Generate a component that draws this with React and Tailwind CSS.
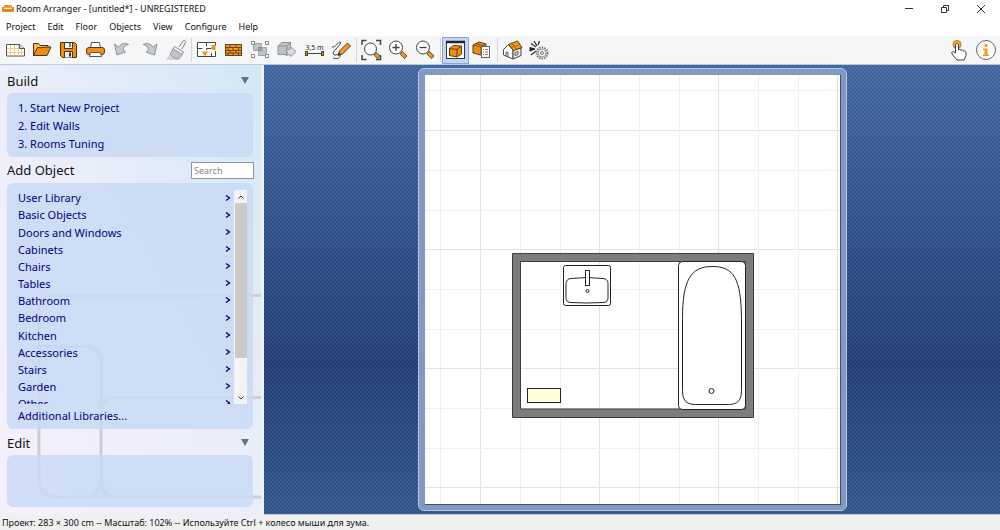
import React, { useState } from 'react';

const BUILD_STEPS = ['1. Start New Project', '2. Edit Walls', '3. Rooms Tuning'];

const CATEGORIES = [
  'User Library',
  'Basic Objects',
  'Doors and Windows',
  'Cabinets',
  'Chairs',
  'Tables',
  'Bathroom',
  'Bedroom',
  'Kitchen',
  'Accessories',
  'Stairs',
  'Garden',
  'Other',
];

const MENUS = ['Project', 'Edit', 'Floor', 'Objects', 'View', 'Configure', 'Help'];

// Toolbar drawings, all on a 24x24 grid
const ICONS = {
  new: (
    <>
      <path d="M3.500 6.500h13l5 4v7.500h-18z" fill="#fffdf5" stroke="#555" />
      <path d="M7.500 7v10.500M11.500 7v10.500M15.500 7v10.500M18.500 11v6.500M4 10.500h12M4 14.500h17" stroke="#f3c98d" />
      <path d="M16.500 6.500v4h5" fill="#ddd" stroke="#555" />
    </>
  ),
  open: (
    <>
      <path d="M3.500 17.500v-12h5l1.500 2h8v3" fill="#ffb74a" stroke="#4a3214" />
      <path d="M3.500 17.500l4-8c4 1 8-1 13.500-.500l-4 8.500z" fill="#f08c14" stroke="#4a3214" />
    </>
  ),
  save: (
    <>
      <path d="M3.500 4.500h14l2 2v13h-14l-2-2z" fill="#f28c13" stroke="#4a3214" />
      <rect x="7.500" y="4.500" width="8" height="6" fill="#fff" stroke="#4a3214" />
      <path d="M7.500 19.500v-6h8v6" fill="#eee" stroke="#4a3214" />
      <path d="M12 14.500h2v4h-2z" fill="#333" />
      <path d="M12 5h2v4h-2z" fill="#777" />
    </>
  ),
  print: (
    <>
      <path d="M6.500 10l1-5.500h8l1 5.500" fill="#fff" stroke="#555" />
      <rect x="2.500" y="9.500" width="18" height="7" rx="2.500" fill="#f28c13" stroke="#5b3a10" />
      <path d="M6.500 14.500h10l1 4h-12z" fill="#fff" stroke="#555" />
    </>
  ),
  undo: <path d="M3.500 6L6 17l8.500-3-2.500-2c.500-3 2.500-5 5.500-5.500C13.500 4.500 9.500 6 7.500 9z" fill="#c6c9cc" stroke="#8f9398" />,
  redo: <path d="M19 6l-2.500 11L8 14l2.500-2C10 9 8 7 5 6.500 9 4.500 13 6 15 9z" fill="#c6c9cc" stroke="#8f9398" />,
  brush: (
    <>
      <path d="M0 22h14l4-4-9-6z" fill="#d4d6d9" />
      <path d="M14 9l4-6c1-1.500 3.500 0 2.500 1.500L17 11" fill="#eee" stroke="#888" />
      <path d="M9.500 8.500l9 5.500-1.500 2.500-9-5.500z" fill="#f4f4f4" stroke="#888" />
      <path d="M8 11l9 5.500-4 4.500c-3-.500-6-2-8-4.500z" fill="#c0c3c7" stroke="#999" />
    </>
  ),
  plan: (
    <>
      <path d="M2.500 4.500h18v14h-18z" fill="#fff" />
      <path d="M2.500 4.500h18v3M20.500 13v5.500h-18v-14M2.500 10.500h5M11.500 4.500v4M11.500 12v-1.500h5M16.500 18v-3" stroke="#444" />
      <rect x="16.500" y="7" width="4" height="5" fill="#f0941f" />
      <path d="M7 13.500h6l-2 4H9z" fill="#f0941f" />
    </>
  ),
  wall: (
    <>
      <rect x="3.500" y="6.500" width="16" height="11" fill="#f29a24" stroke="#6b4510" />
      <path d="M3.500 9.500h16M3.500 12.500h16M3.500 15h16M8 6.500v3M14 6.500v3M6 9.500v3M11 9.500v3M16.500 9.500v3M8 12.500V15M14 12.500V15M6 15v2.500M11 15v2.500M16.500 15v2.500" stroke="#6b4510" />
    </>
  ),
  group: (
    <>
      <path d="M4.500 5.500h8v4h5v8h-8v-5h-5z" fill="#bfc2c5" stroke="#a2a5a8" />
      <path d="M9.500 12.500v-3h3v3z" fill="#a9acaf" stroke="#8b8e91" />
      <g fill="#fff" stroke="#8b8e91">
        <rect x="2.500" y="3.500" width="3" height="3" />
        <rect x="16.500" y="3.500" width="3" height="3" />
        <rect x="2.500" y="16.500" width="3" height="3" />
        <rect x="16.500" y="16.500" width="3" height="3" />
      </g>
    </>
  ),
  move: (
    <>
      <path d="M2 8l4-3.500h8.500v8L11 16.500H2z" fill="#bfc2c5" stroke="#8e9195" />
      <path d="M2 8h9v8.500M11 8l3.500-3.500" stroke="#8e9195" />
      <path d="M10 12l4-1 1-2 5 4.500-5 5-1-2-4 1 1.500-2.500z" fill="#d8dadc" stroke="#8e9195" />
    </>
  ),
  measure: (
    <>
      <path d="M4 15.500h16" stroke="#444" />
      <rect x="2.500" y="13.500" width="2" height="4" fill="#c98a28" stroke="#5b4418" />
      <rect x="18.500" y="13.500" width="2" height="4" fill="#c98a28" stroke="#5b4418" />
      <text x="11.500" y="11.500" textAnchor="middle" fontSize="7" fill="#222">3,5 m</text>
    </>
  ),
  draw: (
    <>
      <path d="M2 9c3 1 6-5 8-5s-1 4-4 7-4 6-1 6 4-2 5 0-2 5-7 3" stroke="#444" />
      <path d="M8 17.500l1.500-4.500L17.500 5l3 3-8 8z" fill="#f2962a" stroke="#5b3a10" />
      <path d="M8 17.500l1-3 2 2z" fill="#333" />
    </>
  ),
  zoomFit: (
    <>
      <path d="M2 7V2.500h4.500M16 2.500h4.500V7M2 17v4.500h4.500M16 21.500h4.500V17" stroke="#444" strokeWidth="1.500" />
      <circle cx="10.500" cy="11" r="6" fill="#fbfbfb" stroke="#444" />
      <path d="M15 15.500l4 4" stroke="#6b4510" strokeWidth="4" />
      <path d="M15.500 16l3 3" stroke="#f29a24" strokeWidth="2.500" />
    </>
  ),
  zoomIn: (
    <>
      <circle cx="9" cy="9.500" r="6.500" fill="#fbfbfb" stroke="#444" />
      <path d="M5.500 9.500h7M9 6v7" stroke="#444" strokeWidth="1.300" />
      <path d="M14 14.500l5 5" stroke="#6b4510" strokeWidth="4" />
      <path d="M14.500 15l4 4" stroke="#f29a24" strokeWidth="2.500" />
    </>
  ),
  zoomOut: (
    <>
      <circle cx="9" cy="9.500" r="6.500" fill="#fbfbfb" stroke="#444" />
      <path d="M5.500 9.500h7" stroke="#444" strokeWidth="1.300" />
      <path d="M14 14.500l5 5" stroke="#6b4510" strokeWidth="4" />
      <path d="M14.500 15l4 4" stroke="#f29a24" strokeWidth="2.500" />
    </>
  ),
  panel: (
    <>
      <rect x="2.500" y="3.500" width="18" height="17" fill="#fff" stroke="#333" />
      <path d="M2 4h19" stroke="#222" strokeWidth="2.500" />
      <path d="M5.500 10.500l4-3 8 .500v8l-4.500 3-7.500-1.500z" fill="#f28c13" stroke="#5b3a10" />
      <path d="M5.500 10.500l7.500 1v7.500M13 11.500L17.500 8" stroke="#5b3a10" />
    </>
  ),
  objectList: (
    <>
      <path d="M2 7l6-3 7 2v8l-5 3-8-2z" fill="#f28c13" stroke="#5b3a10" />
      <path d="M2 7l8 2 5-3M10 9v8M5 5.500l7 2v3" stroke="#7c5218" />
      <rect x="10.500" y="8.500" width="8" height="11" fill="#fff" stroke="#666" />
      <path d="M12 11.500h1M14 11.500h3M12 14h1M14 14h3M12 16.500h1M14 16.500h3" stroke="#777" />
    </>
  ),
  house: (
    <>
      <path d="M2.500 11.500l5-5 4.500 5.500v9l-9.500-4z" fill="#fff" stroke="#444" />
      <path d="M12 12l8-2v7.500L12 21z" fill="#eee" stroke="#444" />
      <path d="M7.500 6.500L16.500 3l4.500 6.500-8.500 3z" fill="#f29a24" stroke="#5b3a10" />
      <path d="M10 9.500l9-3M11 5.500l5 6" stroke="#9b611a" />
      <path d="M5 18v-4l2 .500V19M14 14.500l3-1v3l-3 1z" stroke="#555" />
    </>
  ),
  settings: (
    <>
      <path d="M2 9.500l5 1.500-5 2z" fill="#222" stroke="#222" />
      <path d="M6 3l3 5M3 5.500L8 9M11.500 3L10 7M3 17l5-4" stroke="#333" strokeWidth="1.300" />
      <circle cx="14" cy="15" r="5.500" fill="#f3f3f3" stroke="#777" strokeWidth="2" strokeDasharray="1.500 1" />
      <circle cx="14" cy="15" r="4" fill="#f3f3f3" stroke="#999" />
      <circle cx="14" cy="15" r="1.500" fill="#ddd" stroke="#888" />
    </>
  ),
  touch: (
    <>
      <circle cx="10" cy="6.500" r="4" fill="#f2a93c" stroke="#b27416" />
      <path d="M8.500 15V7c0-2 3-2 3 0v5c1-1 2.500-.500 2.500.500 1-1 2.500-.500 2.500.800 1-1 2.500-.300 2.500 1v3.500l-2 4.200h-7L5 16c-1-2 1-3 2-2z" fill="#fff" stroke="#444" />
    </>
  ),
  info: (
    <>
      <circle cx="12" cy="12" r="9.500" fill="#fdfdfd" stroke="#666" />
      <circle cx="12" cy="7.500" r="1.700" fill="#f39a1c" />
      <path d="M9 10.500h4.500v6H15V18H9v-1.500h1.500V12H9z" fill="#f39a1c" />
    </>
  ),
};

const TOOL_GROUPS = [
  [
    ['new', 'New project'],
    ['open', 'Open'],
    ['save', 'Save'],
    ['print', 'Print'],
    ['undo', 'Undo'],
    ['redo', 'Redo'],
    ['brush', 'Copy style'],
  ],
  [
    ['plan', 'Edit rooms'],
    ['wall', 'Edit walls'],
    ['group', 'Group'],
    ['move', 'Move object'],
    ['measure', 'Measure'],
    ['draw', 'Draw'],
  ],
  [
    ['zoomFit', 'Zoom to fit'],
    ['zoomIn', 'Zoom in'],
    ['zoomOut', 'Zoom out'],
  ],
  [
    ['panel', 'Side panel'],
    ['objectList', 'Object list'],
  ],
  [
    ['house', '3D view'],
    ['settings', 'Render'],
  ],
];

const ToolButton = ({ icon, label, active }) => (
  <button
    type="button"
    aria-label={label}
    aria-pressed={active}
    className={`flex h-[27px] w-[27px] items-center justify-center border ${
      active ? 'border-[#8aa5dc] bg-[#c4d4f3]' : 'border-transparent'
    }`}
  >
    <svg viewBox="0 0 24 24" fill="none" className="h-6 w-6 shrink-0">
      {ICONS[icon]}
    </svg>
  </button>
);

const TitleBar = () => (
  <header className="flex h-[18px] items-center bg-white pr-px">
    <svg viewBox="0 0 12 10" className="ml-0.5 h-2.5 w-3">
      <path d="M2 1h8v3H2z" fill="#f6a13a" />
      <path d="M0 3h2.500v2h7V3H12v5H0z" fill="#ee8a1d" />
      <path d="M3 2h6M3 6.500h6" stroke="#b96510" strokeDasharray="1 1" />
    </svg>
    <h1 className="ml-0.5 text-[9px] text-[#111]">Room Arranger - [untitled*] - UNREGISTERED</h1>
    <div className="ml-auto flex">
      <button type="button" aria-label="Minimize" className="flex w-9 justify-center">
        <svg viewBox="0 0 10 10" className="h-2.5 w-2.5" fill="none" stroke="#333">
          <path d="M1 4.500h8" />
        </svg>
      </button>
      <button type="button" aria-label="Restore" className="flex w-9 justify-center">
        <svg viewBox="0 0 10 10" className="h-2.5 w-2.5" fill="none" stroke="#333">
          <path d="M1.500 3.500h5v5h-5zM3.500 3.500v-2h5v5h-2" />
        </svg>
      </button>
      <button type="button" aria-label="Close" className="flex w-9 justify-center">
        <svg viewBox="0 0 10 10" className="h-2.5 w-2.5" fill="none" stroke="#333">
          <path d="M1 1l8 8M9 1L1 9" />
        </svg>
      </button>
    </div>
  </header>
);

const SectionHeader = ({ title }) => (
  <div className="flex items-center justify-between">
    <h2 className="text-[13px] leading-5 text-[#111]">{title}</h2>
    <button type="button" aria-label={`Collapse ${title}`} className="mr-1">
      <svg viewBox="0 0 8 8" className="h-2 w-2">
        <path d="M0 0h8L4 7z" fill="#68717d" />
      </svg>
    </button>
  </div>
);

const Sidebar = () => {
  const [search, setSearch] = useState('');

  return (
    <aside className="relative flex w-[264px] shrink-0 flex-col border-r-[3px] border-[#eef2f6] bg-linear-to-tr from-[#f6f0fc] via-[#ebeefa] to-[#d3e7f6] pr-2 pl-[7px]">
      {/* Faint outline behind the panels */}
      <svg viewBox="0 -4 261 214" className="absolute bottom-2 left-0 h-[214px] w-full" fill="none" stroke="#cccdd5" strokeWidth="3">
        <path d="M261-1.500H55q-16 0-16 16V183q0 17 17 17H261" />
        <path d="M39 49.500H85q16 0 16 16V183q0 12-12 17M261 100.500H117q-16 0-16 16V183q0 12 12 17" />
      </svg>

      <div className="relative flex flex-1 flex-col">
        <div className="pt-[6px] pb-0.5">
          <SectionHeader title="Build" />
        </div>
        <ul className="rounded-md bg-[#c8d9f4]/85 pt-[6px] pb-1 pl-[11px]">
          {BUILD_STEPS.map((step) => (
            <li key={step} className="flex h-[18px] items-center">
              <a href="#build" className="text-[#00007f]">{step}</a>
            </li>
          ))}
        </ul>

        <div className="flex items-center justify-between py-[3px]">
          <h2 className="text-[13px] leading-5 text-[#111]">Add Object</h2>
          <input
            type="text"
            aria-label="Search objects"
            placeholder="Search"
            value={search}
            onChange={(e) => setSearch(e.target.value)}
            className="-mr-px h-[17px] w-[63px] border border-[#8c939c] bg-white px-0.5 text-[9px] placeholder:text-[#858585]"
          />
        </div>

        <div className="rounded-md bg-[#c8d9f4]/85 pt-[7px] pr-[6px] pl-[11px]">
          <div className="flex h-[214px] overflow-hidden">
            <ul className="grid h-[223px] flex-1 auto-rows-fr">
              {CATEGORIES.map((name) => (
                <li key={name}>
                  <a href="#library" className="flex h-full items-center justify-between text-[#00007f]">
                    {name}
                    <svg viewBox="0 0 6 8" className="mr-[3px] h-2 w-1.5" fill="none" stroke="#00007f" strokeWidth="1.300">
                      <path d="M1 .500l3.500 2.500L1 5.500" />
                    </svg>
                  </a>
                </li>
              ))}
            </ul>
            <div className="flex w-[13px] flex-col bg-[#f3f4f6]">
              <button type="button" aria-label="Scroll up" className="flex h-[13px] items-center justify-center">
                <svg viewBox="0 0 6 4" className="h-1 w-1.5" fill="none" stroke="#333">
                  <path d="M.5 3.500L3 1l2.500 2.500" />
                </svg>
              </button>
              <div className="ml-px h-[155px] bg-[#cacaca]" />
              <button type="button" aria-label="Scroll down" className="mt-auto flex h-[13px] items-center justify-center">
                <svg viewBox="0 0 6 4" className="h-1 w-1.5" fill="none" stroke="#333">
                  <path d="M.5 .5L3 3 5.500 .5" />
                </svg>
              </button>
            </div>
          </div>
          <a href="#more" className="flex h-[25px] items-center text-[#00007f]">Additional Libraries...</a>
        </div>

        <div className="pt-1 pb-0.5">
          <SectionHeader title="Edit" />
        </div>
        <div className="mb-2 flex-1 rounded-md bg-[#c8d9f4]/85" />
      </div>
    </aside>
  );
};

const GRID_STEP = 39.7;

const FloorPlan = () => (
  <svg viewBox="0 0 415 429" className="h-full w-auto bg-white" fill="none" role="img" aria-label="Bathroom floor plan">
    {/* Grid */}
    {Array.from({ length: 11 }, (_, i) => {
      const pos = Math.round(15.4 + i * GRID_STEP) + 0.5;
      const color = i % 3 === 1 ? '#e2e2e2' : '#f0f0f0';
      return (
        <g key={i} stroke={color}>
          <path d={`M${pos} 0V429`} />
          <path d={`M0 ${pos}H415`} />
        </g>
      );
    })}

    {/* Walls */}
    <path d="M87.500 178.500h241v164h-241zM95.500 186.500v147.500h225V186.500z" fill="#7d7d7d" stroke="#3d3d3d" fillRule="evenodd" />

    {/* Sink */}
    <g stroke="#222">
      <rect x="138.500" y="190.500" width="47" height="40" rx="2" fill="#fff" />
      <path d="M146 203.500q16-2 32 0 5 .5 5 5v14q0 5-5 5-16 1-32 0-5 0-5-5v-14q0-4.500 5-5z" />
      <rect x="160.500" y="195.500" width="4" height="15" fill="#fff" />
      <circle cx="162.500" cy="216" r="1.500" />
    </g>

    {/* Bathtub */}
    <g stroke="#222">
      <rect x="253.500" y="186.500" width="67" height="148" rx="4" fill="#fff" />
      <path d="M287 191.500c22 0 29 12 29.500 52v72c0 10-4 14-13 14h-33c-10 0-13-5-13-14v-72c0-38 8-52 29.500-52z" />
      <circle cx="286.500" cy="316" r="2.500" />
    </g>

    {/* Bath mat */}
    <rect x="102.500" y="313.500" width="33" height="14" fill="#feffd8" stroke="#222" />
  </svg>
);

const App = () => (
  <div className="flex h-screen min-h-[530px] flex-col bg-white font-['Noto_Sans','Open_Sans',sans-serif] text-[11px]">
    <TitleBar />

    <nav className="flex h-[18px] items-center gap-3 pl-1.5 text-[9px] text-[#111]">
      {MENUS.map((menu) => (
        <button key={menu} type="button">{menu}</button>
      ))}
    </nav>

    <div className="flex h-[29px] items-center border-b border-[#b9c9e2] bg-[#f5f6f7] px-px">
      {TOOL_GROUPS.map((group, i) => (
        <React.Fragment key={group[0][0]}>
          {i > 0 && <div className="mx-px h-6 w-px bg-[#d3d5d8]" />}
          {group.map(([icon, label]) => (
            <ToolButton key={icon} icon={icon} label={label} active={icon === 'panel'} />
          ))}
        </React.Fragment>
      ))}
      <div className="ml-auto flex">
        <ToolButton icon="touch" label="Touch mode" />
        <ToolButton icon="info" label="About" />
      </div>
    </div>

    <div className="flex min-h-0 flex-1">
      <Sidebar />
      <main className="flex min-w-0 flex-1 border-b border-[#b4c9e6] bg-linear-to-b from-[#4269a5] via-[#223f79] via-67% to-[#32588f]">
        {/* Woven texture over the blue */}
        <div className="flex flex-1 justify-center bg-[repeating-conic-gradient(#ffffff0f_0_25%,#0000000f_0_50%)] bg-size-[4px_4px] pt-[3px] pb-[3px]">
          <div className="h-full rounded-md border border-[#b4c9e6] bg-[#8199c0] pt-[6px] pr-[5px] pb-[5px] pl-[6px]">
            <div className="h-full border-r border-b border-[#474f68]">
              <FloorPlan />
            </div>
          </div>
        </div>
      </main>
    </div>

    <footer className="flex h-[15px] items-center bg-[#f0f0f0] pl-0.5 text-[9px] text-[#111]">
      Проект: 283 × 300 cm -- Масштаб: 102% -- Используйте Ctrl + колесо мыши для зума.
    </footer>
  </div>
);

export default App;
